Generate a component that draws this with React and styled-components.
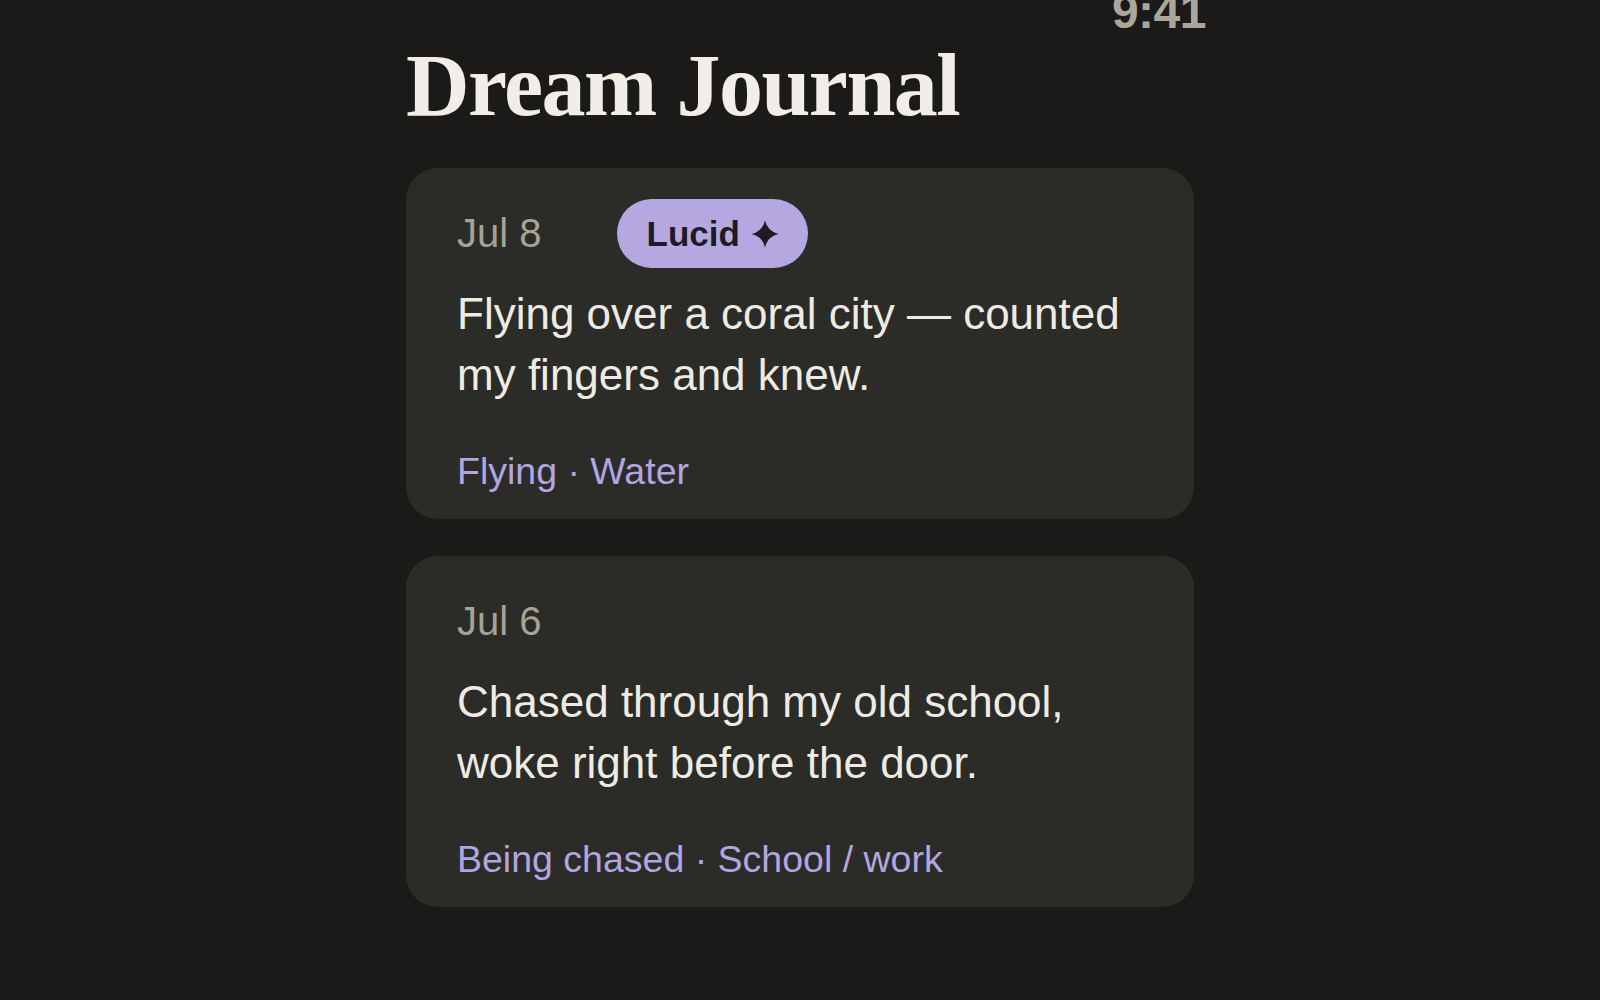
import React from 'react'
import styled, { createGlobalStyle } from 'styled-components';

const GlobalStyle = createGlobalStyle`
    html, body {
        margin: 0;
        padding: 0;
        background: #1b1a18;
        font-family: "Liberation Sans", Arial, sans-serif;
    }
`

const Screen = styled.div`
    min-height: 100vh;
    background: #1b1a18;
    overflow: hidden;
`

const Column = styled.div`
    width: 788px;
    margin: 0 auto;
    display: flex;
    flex-direction: column;
`

const StatusBar = styled.div`
    height: 36px;
    display: flex;
    justify-content: flex-end;
    align-items: flex-end;
    margin-right: -12px;
`

const Time = styled.span`
    font-size: 48px;
    line-height: 48px;
    font-weight: 700;
    color: #a9a69c;
    letter-spacing: -0.5px;
`

const Title = styled.h1`
    margin: 6px 0 38px 0;
    font-family: "Liberation Serif", "Times New Roman", serif;
    font-weight: 700;
    font-size: 88px;
    line-height: 88px;
    letter-spacing: -1.5px;
    color: #f1eee7;
`

const List = styled.div`
    display: flex;
    flex-direction: column;
    gap: 37px;
`

const Card = styled.div`
    background: #2b2b28;
    border-radius: 32px;
    padding: 31px 51px 25px;
    display: flex;
    flex-direction: column;
`

const Header = styled.div`
    height: 69px;
    display: flex;
    align-items: center;
    gap: 75px;
`

const DateLabel = styled.span`
    font-size: 40px;
    color: #a6a396;
`

const Pill = styled.span`
    height: 69px;
    box-sizing: border-box;
    padding: 0 29px 0 30px;
    border-radius: 35px;
    background: #b5a8e0;
    color: #1e1b27;
    display: inline-flex;
    align-items: center;
    gap: 11px;
    font-size: 35px;
    font-weight: 700;
`

const Body = styled.p`
    margin: 15px 0 0;
    font-size: 44px;
    line-height: 61px;
    color: #eeebe4;
`

const Tags = styled.div`
    margin-top: 43px;
    font-size: 37.5px;
    line-height: 46px;
    color: #b2a5e0;
`

const Star = () => (
    <svg width="28" height="28" viewBox="0 0 24 24">
        <path d="M12 0.5 Q14.2 9.8 23.5 12 Q14.2 14.2 12 23.5 Q9.8 14.2 0.5 12 Q9.8 9.8 12 0.5Z" fill="#1e1b27" />
    </svg>
)

const entries = [
    { date: 'Jul 8', lucid: true, text: 'Flying over a coral city — counted my fingers and knew.', tags: ['Flying', 'Water'] },
    { date: 'Jul 6', lucid: false, text: 'Chased through my old school, woke right before the door.', tags: ['Being chased', 'School / work'] },
]

export default function App() {
    return (
        <Screen>
            <GlobalStyle />
            <Column>
                <StatusBar>
                    <Time>9:41</Time>
                </StatusBar>
                <Title>Dream Journal</Title>
                <List>
                    {entries.map(e => (
                        <Card key={e.date}>
                            <Header>
                                <DateLabel>{e.date}</DateLabel>
                                {e.lucid && <Pill>Lucid <Star /></Pill>}
                            </Header>
                            <Body>{e.text}</Body>
                            <Tags>{e.tags.join(' · ')}</Tags>
                        </Card>
                    ))}
                </List>
            </Column>
        </Screen>
    )
}
